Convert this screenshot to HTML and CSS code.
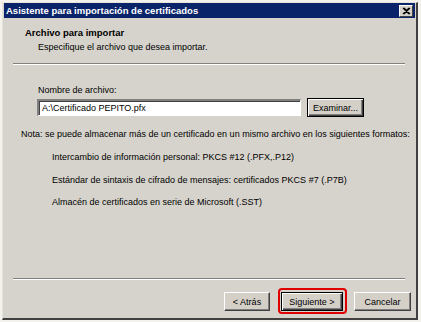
FILE: index.html
```html
<!DOCTYPE html>
<html>
<head>
<meta charset="utf-8">
<link rel="stylesheet" href="styles.css">
</head>
<body>
<div class="window">
  <div class="titlebar">
    <span class="title">Asistente para importación de certificados</span>
    <span class="close"><svg width="9" height="8" viewBox="0 0 9 8"><path d="M1 1 L7 7 M2 1 L8 7 M7 1 L1 7 M8 1 L2 7" stroke="#000" stroke-width="1.1" fill="none"/></svg></span>
  </div>
  <div class="header">
    <div class="h-title">Archivo para importar</div>
    <div class="h-sub">Especifique el archivo que desea importar.</div>
  </div>
  <div class="sep top-sep"></div>
  <div class="content">
    <div class="label">Nombre de archivo:</div>
    <div class="file-row">
      <div class="input">A:\Certificado PEPITO.pfx</div>
      <div class="btn browse">Examinar...</div>
    </div>
    <div class="note">Nota: se puede almacenar más de un certificado en un mismo archivo en los siguientes formatos:</div>
    <ul class="formats">
      <li>Intercambio de información personal: PKCS #12 (.PFX,.P12)</li>
      <li>Estándar de sintaxis de cifrado de mensajes: certificados PKCS #7 (.P7B)</li>
      <li>Almacén de certificados en serie de Microsoft (.SST)</li>
    </ul>
  </div>
  <div class="sep bottom-sep"></div>
  <div class="buttons">
    <div class="btn nav">&lt; Atrás</div>
    <div class="btn nav next">Siguiente &gt;<span class="highlight"></span></div>
    <div class="btn nav cancel">Cancelar</div>
  </div>
</div>
</body>
</html>
```

FILE: styles.css
```css
html, body {
  margin: 0;
  padding: 0;
}
body {
  background: #f4f2ec;
  width: 421px;
  height: 322px;
  overflow: hidden;
  font-family: "Liberation Sans", Arial, sans-serif;
  font-size: 9px;
  color: #000;
}
.window {
  margin: 2px 0 0 2px;
  width: 413px;
  height: 315px;
  background: #d6d3cc;
  border-top: 1px solid #e6e3dc;
  border-left: 1px solid #e6e3dc;
  border-right: 2px solid #404040;
  border-bottom: 2px solid #404040;
  display: flex;
  flex-direction: column;
}
.titlebar {
  height: 15px;
  margin: 0 1px 0 1px;
  background: #0a246a;
  color: #fff;
  display: flex;
  align-items: center;
  justify-content: space-between;
  padding-left: 2px;
}
.title {
  font-weight: bold;
  font-size: 9.5px;
}
.close {
  width: 12px;
  height: 10px;
  margin-right: 2px;
  background: #d4d0c8;
  border-top: 1px solid #fff;
  border-left: 1px solid #fff;
  border-right: 1px solid #404040;
  border-bottom: 1px solid #404040;
  display: flex;
  align-items: center;
  justify-content: center;
}
.header {
  padding: 9px 0 0 22px;
  height: 36px;
  box-sizing: border-box;
}
.h-title {
  font-weight: bold;
  font-size: 9.5px;
  line-height: 11px;
}
.h-sub {
  margin: 4px 0 0 13px;
  line-height: 11px;
}
.sep {
  height: 0;
  border-top: 1px solid #808080;
  border-bottom: 1px solid #fff;
}
.top-sep {
  margin: 9px 11px 0 10px;
}
.content {
  flex: 1;
  padding: 0 0 0 15px;
}
.label {
  margin: 20px 0 0 20px;
  line-height: 11px;
}
.file-row {
  display: flex;
  align-items: center;
  margin: 2px 0 0 19px;
}
.input {
  width: 258px;
  height: 14px;
  background: #fff;
  border-top: 2px solid #808080;
  border-left: 2px solid #808080;
  border-right: 1px solid #fff;
  border-bottom: 1px solid #fff;
  box-shadow: inset 1px 1px 0 #404040;
  line-height: 14px;
  padding-left: 3px;
}
.btn {
  background: #d4d0c8;
  border-top: 1px solid #fff;
  border-left: 1px solid #fff;
  border-right: 1px solid #404040;
  border-bottom: 1px solid #404040;
  box-shadow: inset -1px -1px 0 #808080;
  display: flex;
  align-items: center;
  justify-content: center;
  box-sizing: border-box;
}
.browse {
  width: 57px;
  height: 19px;
  margin-left: 6px;
  border: 1px solid #000;
  box-shadow: inset 1px 1px 0 #fff, inset -1px -1px 0 #404040, inset -2px -2px 0 #808080;
}
.note {
  margin: 12px 0 0 3px;
  line-height: 11px;
}
.formats {
  list-style: none;
  margin: 12px 0 0 34px;
  padding: 0;
}
.formats li {
  line-height: 11px;
  margin-bottom: 11.5px;
}
.bottom-sep {
  margin: 0 11px 0 10px;
}
.buttons {
  height: 38px;
  display: flex;
  justify-content: flex-end;
  align-items: flex-start;
  padding: 12px 5px 0 0;
  box-sizing: border-box;
  gap: 11px;
}
.nav {
  width: 46px;
  height: 19px;
}
.next {
  width: 62px;
  position: relative;
  border: 1px solid #000;
  box-shadow: inset 1px 1px 0 #fff, inset -1px -1px 0 #404040, inset -2px -2px 0 #808080;
}
.cancel {
  width: 57px;
}
.highlight {
  position: absolute;
  left: -4px;
  top: -5px;
  right: -5px;
  bottom: -4px;
  border: 2px solid #e00000;
  border-radius: 4px;
}
```
